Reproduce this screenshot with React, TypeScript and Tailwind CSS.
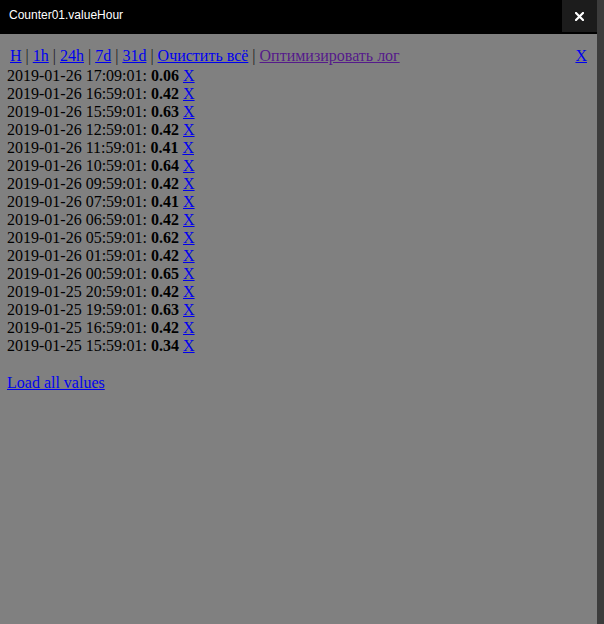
import React from "react";

const rows: [string, string][] = [
  ["2019-01-26 17:09:01", "0.06"],
  ["2019-01-26 16:59:01", "0.42"],
  ["2019-01-26 15:59:01", "0.63"],
  ["2019-01-26 12:59:01", "0.42"],
  ["2019-01-26 11:59:01", "0.41"],
  ["2019-01-26 10:59:01", "0.64"],
  ["2019-01-26 09:59:01", "0.42"],
  ["2019-01-26 07:59:01", "0.41"],
  ["2019-01-26 06:59:01", "0.42"],
  ["2019-01-26 05:59:01", "0.62"],
  ["2019-01-26 01:59:01", "0.42"],
  ["2019-01-26 00:59:01", "0.65"],
  ["2019-01-25 20:59:01", "0.42"],
  ["2019-01-25 19:59:01", "0.63"],
  ["2019-01-25 16:59:01", "0.42"],
  ["2019-01-25 15:59:01", "0.34"],
];

const navLinks = ["H", "1h", "24h", "7d", "31d", "Очистить всё"];

export default function App() {
  return (
    <div className="flex h-[624px] w-[604px] bg-[#3c3c3c]">
      <div className="flex w-[597px] flex-col bg-[#808080]">
        {/* header */}
        <div className="flex h-[34px] items-start bg-black">
          <div className="flex-1 pl-[9px] pt-[8px] font-['Liberation_Sans',Arial,sans-serif] text-[12px] leading-[14px] text-white">
            Counter01.valueHour
          </div>
          <div className="flex h-[32px] w-[35px] items-center justify-center bg-[#1c1c1c]">
            <svg width="9" height="9" viewBox="0 0 9 9">
              <path d="M1 1 L8 8 M8 1 L1 8" stroke="white" strokeWidth="2.2" strokeLinecap="square" />
            </svg>
          </div>
        </div>

        {/* body */}
        <div className="flex flex-col pl-[7px] pr-[10px] pt-[13px] font-['Liberation_Serif','Times_New_Roman',serif] text-[16px] leading-[18px] text-black">
          <div className="mb-[2px] flex items-start">
            <div className="flex-1 pl-[3px]">
              {navLinks.map((l) => (
                <React.Fragment key={l}>
                  <a href="#" className="text-[#0000ee] underline">
                    {l}
                  </a>
                  <span className="text-[#222]"> | </span>
                </React.Fragment>
              ))}
              <a href="#" className="text-[#551a8b] underline">
                Оптимизировать лог
              </a>
            </div>
            <a href="#" className="text-[#0000ee] underline">
              X
            </a>
          </div>

          {rows.map(([ts, v]) => (
            <div key={ts}>
              {ts}: <b>{v}</b>{" "}
              <a href="#" className="text-[#0000ee] underline">
                X
              </a>
            </div>
          ))}

          <div className="h-[19px]" />
          <div>
            <a href="#" className="text-[#0000ee] underline">
              Load all values
            </a>
          </div>
        </div>
      </div>
    </div>
  );
}
